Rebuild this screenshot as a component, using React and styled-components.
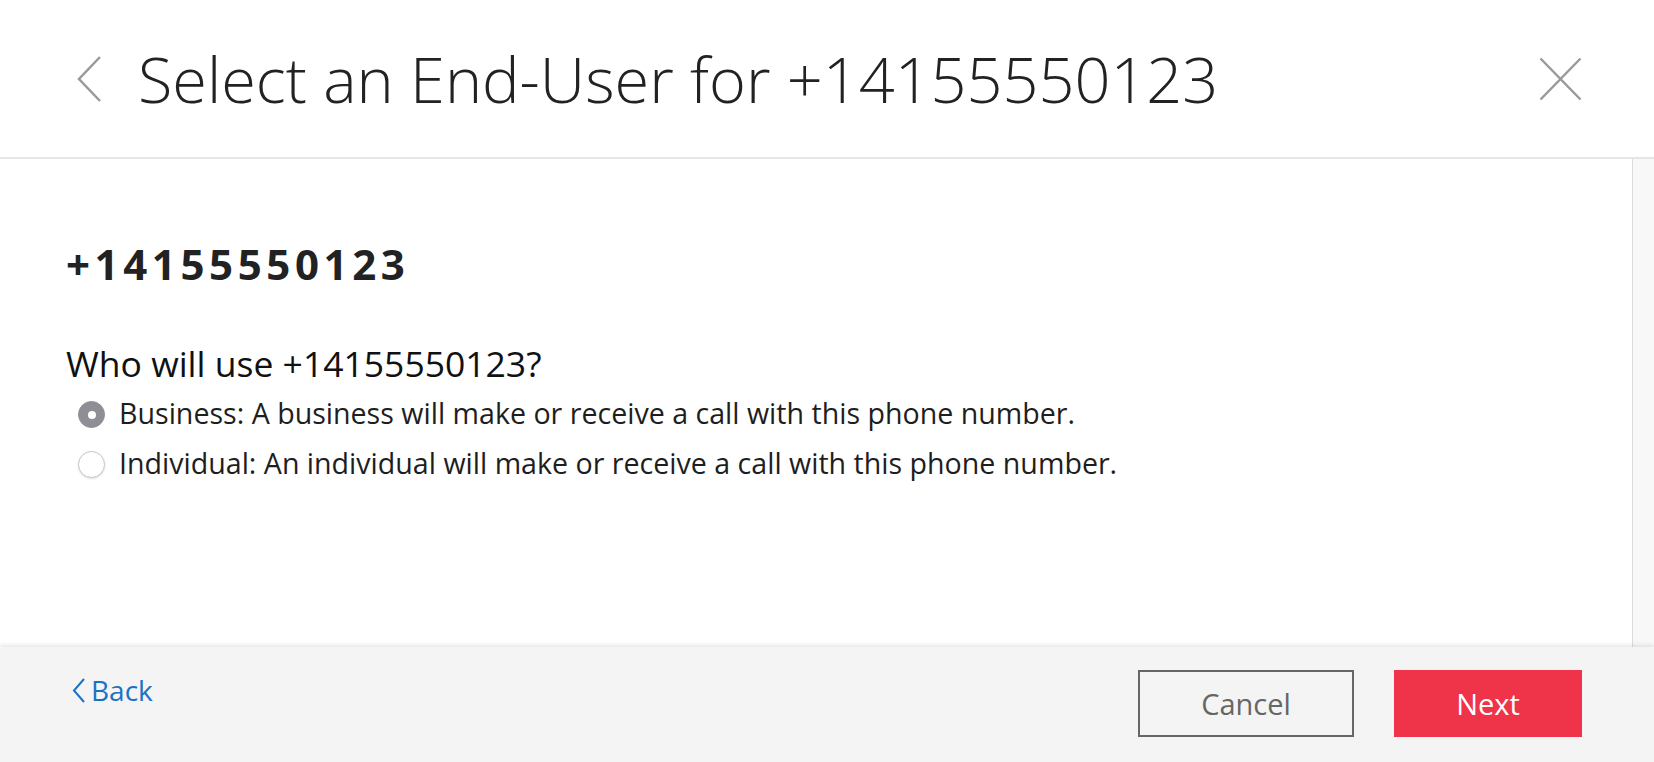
import React, { useState } from 'react';
import styled, { createGlobalStyle } from 'styled-components';

const GlobalStyle = createGlobalStyle`
    html, body, #root {
        height: 100%;
    }
    body {
        margin: 0;
        font-family: "Open Sans", "Liberation Sans", sans-serif;
        color: #1e1e1e;
        background: #ffffff;
    }
    * {
        box-sizing: border-box;
    }
`;

const Page = styled.div`
    height: 100vh;
    display: flex;
    flex-direction: column;
    overflow: hidden;
`;

const Header = styled.header`
    height: 159px;
    flex-shrink: 0;
    display: flex;
    align-items: center;
    padding: 0 72px 0 76px;
    background: #ffffff;
    border-bottom: 2px solid #e6e6e6;
`;

const IconButton = styled.button`
    display: flex;
    align-items: center;
    justify-content: center;
    padding: 0;
    border: 0;
    background: none;
    cursor: pointer;
    color: #9a9a9a;
`;

const Title = styled.h1`
    flex: 1;
    margin: 0 0 0 36px;
    font-size: 63px;
    line-height: 70px;
    font-weight: 300;
    color: #222222;
    white-space: nowrap;
`;

const Body = styled.div`
    flex: 1;
    display: flex;
    min-height: 0;
`;

const Panel = styled.main`
    flex: 1;
    background: #ffffff;
    border-right: 1px solid #dcdcdc;
    padding: 81px 66px 0;
`;

const Track = styled.div`
    width: 21px;
    background: #f8f8f8;
`;

const Number = styled.div`
    font-size: 42px;
    line-height: 48px;
    font-weight: 700;
    letter-spacing: 4.6px;
    color: #222222;
`;

const Question = styled.div`
    margin-top: 55px;
    font-size: 35.5px;
    line-height: 40px;
    color: #111111;
`;

const Options = styled.div`
    margin-top: 5px;
    display: flex;
    flex-direction: column;
`;

const Option = styled.label`
    display: flex;
    align-items: center;
    gap: 14px;
    height: 50px;
    margin-left: 12px;
    font-size: 28.6px;
    line-height: 50px;
    color: #1e1e1e;
    cursor: pointer;
`;

const Radio = styled.input.attrs({ type: 'radio' })`
    appearance: none;
    margin: 3px 0 0;
    width: 27px;
    height: 27px;
    border-radius: 50%;
    flex-shrink: 0;
    background: #ffffff;
    border: 1px solid #c6c6c6;
    box-shadow: 0 1px 2px rgba(0, 0, 0, 0.12);
    position: relative;

    &:checked {
        background: #8f8e94;
        border-color: #8f8e94;
        box-shadow: none;
    }
    &:checked::after {
        content: '';
        position: absolute;
        left: 50%;
        top: 50%;
        width: 8px;
        height: 8px;
        margin: -4px 0 0 -4px;
        border-radius: 50%;
        background: #ffffff;
    }
`;

const Footer = styled.footer`
    height: 115px;
    flex-shrink: 0;
    position: relative;
    z-index: 1;
    display: flex;
    justify-content: space-between;
    align-items: flex-start;
    padding: 23px 72px 0;
    background: #f4f4f4;
    box-shadow: 0 -2px 4px rgba(0, 0, 0, 0.1);
`;

const BackLink = styled.a`
    display: flex;
    align-items: center;
    gap: 6px;
    margin-top: 3px;
    font-size: 28px;
    line-height: 34px;
    color: #1b72c4;
    text-decoration: none;
    cursor: pointer;
`;

const Actions = styled.div`
    display: flex;
    gap: 40px;
`;

const Button = styled.button`
    height: 67px;
    width: ${(p) => p.$width}px;
    font-family: inherit;
    font-size: 29px;
    cursor: pointer;
    border: 2px solid ${(p) => (p.$primary ? '#ef3349' : '#666666')};
    background: ${(p) => (p.$primary ? '#ef3349' : 'transparent')};
    color: ${(p) => (p.$primary ? '#ffffff' : '#666666')};
`;

const phone = '+14155550123';

const App = () => {
    const [endUser, setEndUser] = useState('business');

    return (
        <>
            <GlobalStyle />
            <Page>
                <Header>
                    <IconButton aria-label="Back">
                        <svg width="26" height="46" viewBox="0 0 26 46">
                            <polyline points="24,1 3,23 24,45" fill="none" stroke="currentColor" strokeWidth="2.5" />
                        </svg>
                    </IconButton>
                    <Title>Select an End-User for {phone}</Title>
                    <IconButton aria-label="Close">
                        <svg width="43" height="44" viewBox="0 0 43 44">
                            <path d="M1.5 1.5 L41.5 42.5 M41.5 1.5 L1.5 42.5" fill="none" stroke="currentColor" strokeWidth="2.5" />
                        </svg>
                    </IconButton>
                </Header>
                <Body>
                    <Panel>
                        <Number>{phone}</Number>
                        <Question>Who will use {phone}?</Question>
                        <Options>
                            <Option>
                                <Radio name="enduser" checked={endUser === 'business'} onChange={() => setEndUser('business')} />
                                Business: A business will make or receive a call with this phone number.
                            </Option>
                            <Option>
                                <Radio name="enduser" checked={endUser === 'individual'} onChange={() => setEndUser('individual')} />
                                Individual: An individual will make or receive a call with this phone number.
                            </Option>
                        </Options>
                    </Panel>
                    <Track />
                </Body>
                <Footer>
                    <BackLink>
                        <svg width="13" height="25" viewBox="0 0 13 25">
                            <polyline points="12,1 2,12.5 12,24" fill="none" stroke="currentColor" strokeWidth="2" />
                        </svg>
                        Back
                    </BackLink>
                    <Actions>
                        <Button $width={216}>Cancel</Button>
                        <Button $width={188} $primary>Next</Button>
                    </Actions>
                </Footer>
            </Page>
        </>
    );
};

export default App;
